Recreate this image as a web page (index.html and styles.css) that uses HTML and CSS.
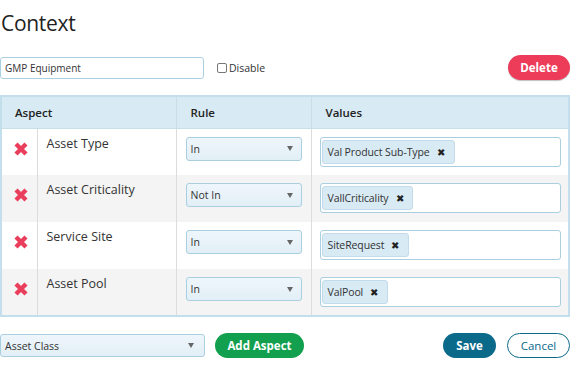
FILE: index.html
```html
<!DOCTYPE html>
<html>
<head>
<meta charset="utf-8">
<link rel="stylesheet" href="styles.css">
</head>
<body>
<div class="page">
  <h1 class="title">Context</h1>
  <div class="topbar">
    <input class="name-input" type="text" value="GMP Equipment">
    <label class="check"><span class="box"></span>Disable</label>
    <button class="btn btn-delete">Delete</button>
  </div>
  <table class="grid">
    <colgroup>
      <col class="c-x"><col class="c-name"><col class="c-rule"><col class="c-values">
    </colgroup>
    <thead>
      <tr><th colspan="2" class="h-aspect">Aspect</th><th>Rule</th><th>Values</th></tr>
    </thead>
    <tbody>
      <tr>
        <td class="xcell"><svg class="xicon" viewBox="0 0 16 16"><path d="M3 3 L13 13 M13 3 L3 13" /></svg></td>
        <td class="name">Asset Type</td>
        <td><div class="select"><span>In</span><span class="arrow"></span></div></td>
        <td><div class="values"><span class="tag">Val Product Sub-Type<span class="tx">✖</span></span></div></td>
      </tr>
      <tr class="alt">
        <td class="xcell"><svg class="xicon" viewBox="0 0 16 16"><path d="M3 3 L13 13 M13 3 L3 13" /></svg></td>
        <td class="name">Asset Criticality</td>
        <td><div class="select"><span>Not In</span><span class="arrow"></span></div></td>
        <td><div class="values"><span class="tag">VallCriticality<span class="tx">✖</span></span></div></td>
      </tr>
      <tr>
        <td class="xcell"><svg class="xicon" viewBox="0 0 16 16"><path d="M3 3 L13 13 M13 3 L3 13" /></svg></td>
        <td class="name">Service Site</td>
        <td><div class="select"><span>In</span><span class="arrow"></span></div></td>
        <td><div class="values"><span class="tag">SiteRequest<span class="tx">✖</span></span></div></td>
      </tr>
      <tr class="alt">
        <td class="xcell"><svg class="xicon" viewBox="0 0 16 16"><path d="M3 3 L13 13 M13 3 L3 13" /></svg></td>
        <td class="name">Asset Pool</td>
        <td><div class="select"><span>In</span><span class="arrow"></span></div></td>
        <td><div class="values"><span class="tag">ValPool<span class="tx">✖</span></span></div></td>
      </tr>
    </tbody>
  </table>
  <div class="bottombar">
    <div class="select select-wide"><span>Asset Class</span><span class="arrow"></span></div>
    <button class="btn btn-add">Add Aspect</button>
    <span class="spacer"></span>
    <button class="btn btn-save">Save</button>
    <button class="btn btn-cancel">Cancel</button>
  </div>
</div>
</body>
</html>
```
FILE: styles.css
```css
* { box-sizing: border-box; }
body {
  margin: 0;
  font-family: "Open Sans", "Noto Sans", sans-serif;
  color: #333;
  background: #fff;
}
.page { width: 570px; }
.title {
  margin: 0;
  padding-top: 8px;
  padding-left: 1px;
  font-size: 21px;
  line-height: 30px;
  font-weight: 400;
  color: #222;
  letter-spacing: -0.3px;
}
.topbar {
  display: flex;
  align-items: center;
  margin-top: 17px;
  height: 25px;
}
.name-input {
  width: 204px;
  height: 22px;
  border: 1px solid #a9cfe0;
  border-radius: 3px;
  padding: 0 4px;
  font-family: inherit;
  font-size: 10px;
  color: #333;
  outline: none;
}
.check {
  display: flex;
  align-items: center;
  margin-left: 13px;
  font-size: 10.5px;
  color: #333;
}
.box {
  width: 10px;
  height: 10px;
  border: 1px solid #777;
  border-radius: 2px;
  margin-right: 2px;
}
.btn {
  font-family: inherit;
  font-weight: 700;
  font-size: 11.5px;
  border-radius: 13px;
  height: 25px;
  border: none;
  padding: 0;
}
.btn-delete {
  margin-left: auto;
  width: 62px;
  background: #ec3c5a;
  color: #fff;
  box-shadow: 0 1px 1px rgba(0,0,0,0.25);
}
.grid {
  margin-top: 15px;
  width: 570px;
  border-collapse: collapse;
  border: 2px solid #c3dfeb;
  table-layout: fixed;
}
.c-x { width: 36px; }
.c-name { width: 139px; }
.c-rule { width: 135px; }
.grid th {
  background: #d8eaf3;
  height: 32px;
  text-align: left;
  font-size: 11.5px;
  font-weight: 600;
  color: #222;
  padding: 0 14px;
  border-left: 1px solid #c9dfe8;
  border-bottom: 1px solid #c9dfe8;
}
.grid th.h-aspect { padding-left: 13px; }
.grid td {
  height: 47px;
  vertical-align: top;
  padding: 8px 9px 0 9px;
  border-left: 1px solid #dcdcdc;
}
.grid td:first-child, .grid th:first-child { border-left: none; }
.grid tr.alt td { background: #f4f4f4; }
.xcell { padding: 12px 0 0 11px !important; }
.xicon { width: 16px; height: 16px; display: block; }
.xicon path { stroke: #ea3f5c; stroke-width: 4.4; stroke-linecap: butt; fill: none; }
.name {
  font-size: 12.5px;
  color: #333;
  padding-left: 9px !important;
  padding-top: 6px !important;
}
.select {
  display: flex;
  align-items: center;
  justify-content: space-between;
  width: 116px;
  height: 24px;
  border: 1px solid #a9cfe0;
  border-radius: 3px;
  background: linear-gradient(#eef6fb, #e2eff6);
  padding: 0 8px 0 4px;
  font-size: 10.5px;
  color: #333;
}
.arrow {
  width: 0; height: 0;
  border-left: 3.5px solid transparent;
  border-right: 3.5px solid transparent;
  border-top: 5px solid #666;
}
.values {
  width: 241px;
  height: 30px;
  margin-left: -1px;
  border: 1px solid #a9cfe0;
  border-radius: 3px;
  background: #fff;
  padding: 2px 1px;
  display: flex;
}
.tag {
  display: inline-flex;
  align-items: center;
  height: 24px;
  background: #d8eaf3;
  border: 1px solid #c3dceb;
  border-radius: 3px;
  padding: 0 9px 0 5px;
  font-size: 10.5px;
  letter-spacing: -0.1px;
  color: #333;
}
.tx { font-size: 10px; margin-left: 7px; color: #222; }
.bottombar {
  display: flex;
  align-items: center;
  margin-top: 16px;
  height: 25px;
}
.select-wide {
  width: 205px;
  height: 23px;
  padding-right: 10px;
}
.btn-add {
  margin-left: 10px;
  width: 89px;
  background: #12a04e;
  color: #fff;
}
.spacer { flex: 1; }
.btn-save {
  width: 53px;
  background: #0b6a8a;
  color: #fff;
}
.btn-cancel {
  margin-left: 11px;
  width: 63px;
  background: #fff;
  color: #0b6a8a;
  border: 1px solid #0b6a8a;
  font-weight: 400;
}
```
